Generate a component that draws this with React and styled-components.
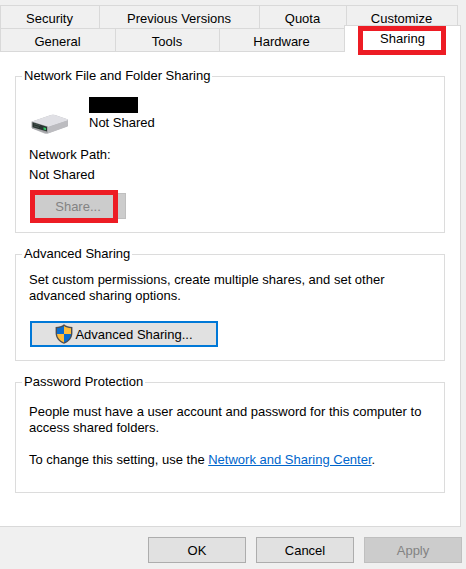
import React from 'react';
import styled, { createGlobalStyle } from 'styled-components';

const TAB_ROWS = [
  {
    columns: '99fr 160fr 87fr 112fr',
    inset: true,
    tabs: ['Security', 'Previous Versions', 'Quota', 'Customize'],
  },
  {
    columns: '115fr 104fr 125fr 117fr',
    inset: false,
    tabs: ['General', 'Tools', 'Hardware', 'Sharing'],
  },
];

const DriveIcon = () => (
  <svg width="38" height="21" viewBox="0 0 38 21" aria-hidden="true">
    <path d="M1 7.5 20 1Q22 .4 24 1L37 5.5V12L16.500 19.500Q15 20 13.500 19.500L1 14.500Z" fill="#b4b4b8" />
    <path d="M1 7.500 20 1Q22 .4 24 1L37 5.500Q37.500 6 36.500 6.600L17 13Z" fill="#e0e0e5" />
    <path d="M17 13 36.500 6.500Q37 6.300 37 7V11.500Q37 12.300 36 12.700L17 19.500Z" fill="#bcbcc0" />
    <path d="M.5 7.500 17 12.500V19.500L1.500 14.500Q.5 14.200.5 13.500Z" fill="#a4a5a8" />
    <path d="M1.500 8.300 16 12.700V17.500L1.500 13.300Z" fill="#283431" />
    <path d="M3 9.800 9 11.500M3 12 8 13.400" stroke="#46534f" strokeWidth="1" />
    <path d="M12.500 13.200 15 14V16.300L12.500 15.500Z" fill="#2fc861" />
  </svg>
);

const ShieldIcon = () => (
  <svg width="18" height="20" viewBox="0 0 18 20" aria-hidden="true">
    <path d="M9 .3C6.800 2 4 2.900.6 2.900V9C.6 13.800 3.700 17.700 9 19.800 14.300 17.700 17.400 13.800 17.400 9V2.900C14 2.900 11.200 2 9 .3Z" fill="#4a4d52" />
    <path d="M9 1.900C7 3.300 4.700 4 2 4.200V10H9Z" fill="#0a6cce" />
    <path d="M9 1.900C11 3.300 13.300 4 16 4.200V10H9Z" fill="#ffbd3c" />
    <path d="M2 10C2.300 13.700 4.800 16.700 9 18.400V10Z" fill="#ffbd3c" />
    <path d="M16 10C15.700 13.700 13.200 16.700 9 18.400V10Z" fill="#0a6cce" />
  </svg>
);

const App = () => {
  return (
    <>
      <GlobalStyle />
      <Dialog>
        <div role="tablist" aria-label="Drive properties">
          {TAB_ROWS.map((row) => (
            <TabRow key={row.columns} $columns={row.columns} $inset={row.inset}>
              {row.tabs.map((tab) => (
                <Tab
                  key={tab}
                  type="button"
                  role="tab"
                  id={tab === 'Sharing' ? 'sharing-tab' : undefined}
                  aria-selected={tab === 'Sharing'}
                  $active={tab === 'Sharing'}
                  $lower={!row.inset}
                >
                  {tab}
                </Tab>
              ))}
            </TabRow>
          ))}
        </div>

        <Panel role="tabpanel" aria-labelledby="sharing-tab">
          <Group>
            <Legend>Network File and Folder Sharing</Legend>
            <GroupBody $top={13} $bottom={13}>
              <Drive>
                <DriveIcon />
                <div>
                  <Redacted />
                  <Text>Not Shared</Text>
                </div>
              </Drive>
              <PathInfo>
                <Text>Network Path:</Text>
                <Text>Not Shared</Text>
              </PathInfo>
              <Marked>
                <ShareButton type="button" disabled>
                  Share...
                </ShareButton>
              </Marked>
            </GroupBody>
          </Group>

          <Group>
            <Legend>Advanced Sharing</Legend>
            <GroupBody $top={10} $bottom={13}>
              <Text>
                Set custom permissions, create multiple shares, and set other advanced sharing options.
              </Text>
              <AdvancedButton type="button">
                <ShieldIcon />
                <span>Advanced Sharing...</span>
              </AdvancedButton>
            </GroupBody>
          </Group>

          <Group>
            <Legend>Password Protection</Legend>
            <GroupBody $top={14} $bottom={24}>
              <Paragraphs>
                <Text>
                  People must have a user account and password for this computer to access shared folders.
                </Text>
                <Text>
                  To change this setting, use the <TextLink href="#network">Network and Sharing Center</TextLink>.
                </Text>
              </Paragraphs>
            </GroupBody>
          </Group>
        </Panel>

        <Footer>
          <FooterButton type="button">OK</FooterButton>
          <FooterButton type="button">Cancel</FooterButton>
          <FooterButton type="button" disabled>
            Apply
          </FooterButton>
        </Footer>
      </Dialog>
    </>
  );
};

const GlobalStyle = createGlobalStyle`
  * {
    box-sizing: border-box;
  }

  body {
    margin: 0;
    background: #f0f0f0;
    color: #000000;
    font-family: 'Liberation Sans', Arial, sans-serif;
    font-size: 13px;
    line-height: 16px;
  }

  button {
    font: inherit;
    color: inherit;
  }
`;

const Dialog = styled.main`
  padding: 5px 5px 5px 0;
`;

const TabRow = styled.div`
  display: grid;
  grid-template-columns: ${({ $columns }) => $columns};
  margin-right: ${({ $inset }) => ($inset ? '3px' : '0')};
`;

const Tab = styled.button`
  position: relative;
  height: ${({ $lower }) => ($lower ? '24px' : '23px')};
  min-width: 0;
  padding: 3px 1px 0 0;
  background: #f0f0f0;
  border: solid #d9d9d9;
  border-width: 1px 0 0 1px;
  white-space: nowrap;

  &:last-child {
    border-right-width: 1px;
  }

  ${({ $lower }) => $lower && 'border-bottom-width: 1px;'}

  ${({ $active }) =>
    $active &&
    `
    height: 27px;
    margin-top: -3px;
    padding: 0 0 1px;
    background: #ffffff;
    border-bottom-width: 0;

    &::after {
      content: '';
      position: absolute;
      inset: 0 14px -3px 13px;
      border: 5px solid #ed1c24;
    }
  `}
`;

const Panel = styled.section`
  display: flex;
  flex-direction: column;
  gap: 13px;
  padding: 16px 15px 33px;
  background: #ffffff;
  border: solid #d9d9d9;
  border-width: 0 1px 1px 0;
`;

const Group = styled.fieldset`
  min-width: 0;
  margin: 0;
  padding: 0 6px;
  border: 1px solid #dcdcdc;
`;

const Legend = styled.legend`
  padding: 0 2px;
`;

const GroupBody = styled.div`
  padding: ${({ $top, $bottom }) => `${$top}px 7px ${$bottom}px`};
`;

const Text = styled.p`
  margin: 0;
`;

const Drive = styled.div`
  display: flex;
  align-items: flex-end;
  gap: 20px;
  padding-left: 2px;

  svg {
    margin-bottom: -4px;
  }
`;

const Redacted = styled.div`
  width: 49px;
  height: 16px;
  margin-bottom: 2px;
  background: #000000;
`;

const PathInfo = styled.div`
  display: flex;
  flex-direction: column;
  gap: 4px;
  margin: 16px 0 10px;
`;

const Marked = styled.div`
  position: relative;
  width: fit-content;
  margin-left: 1px;

  &::after {
    content: '';
    position: absolute;
    inset: -3px 8px -4px 0;
    border: 5px solid #ed1c24;
  }
`;

const Button = styled.button`
  display: flex;
  align-items: center;
  justify-content: center;
  height: 26px;
  padding: 2px 0 0;
  background: #e1e1e1;
  border: 1px solid #adadad;

  &:disabled {
    background: #cccccc;
    border-color: #bfbfbf;
    color: #838383;
  }
`;

const ShareButton = styled(Button)`
  width: 96px;
`;

const AdvancedButton = styled(Button)`
  gap: 2px;
  width: 188px;
  margin: 17px 0 0 1px;
  padding: 0;
  border: 2px solid #0078d7;

  span {
    padding-top: 2px;
  }
`;

const Paragraphs = styled.div`
  display: flex;
  flex-direction: column;
  gap: 16px;
`;

const TextLink = styled.a`
  color: #0066cc;
`;

const Footer = styled.footer`
  display: flex;
  justify-content: flex-end;
  gap: 10px;
  padding-top: 10px;
  margin-right: -1px;
`;

const FooterButton = styled(Button)`
  width: 98px;
`;

export default App;
